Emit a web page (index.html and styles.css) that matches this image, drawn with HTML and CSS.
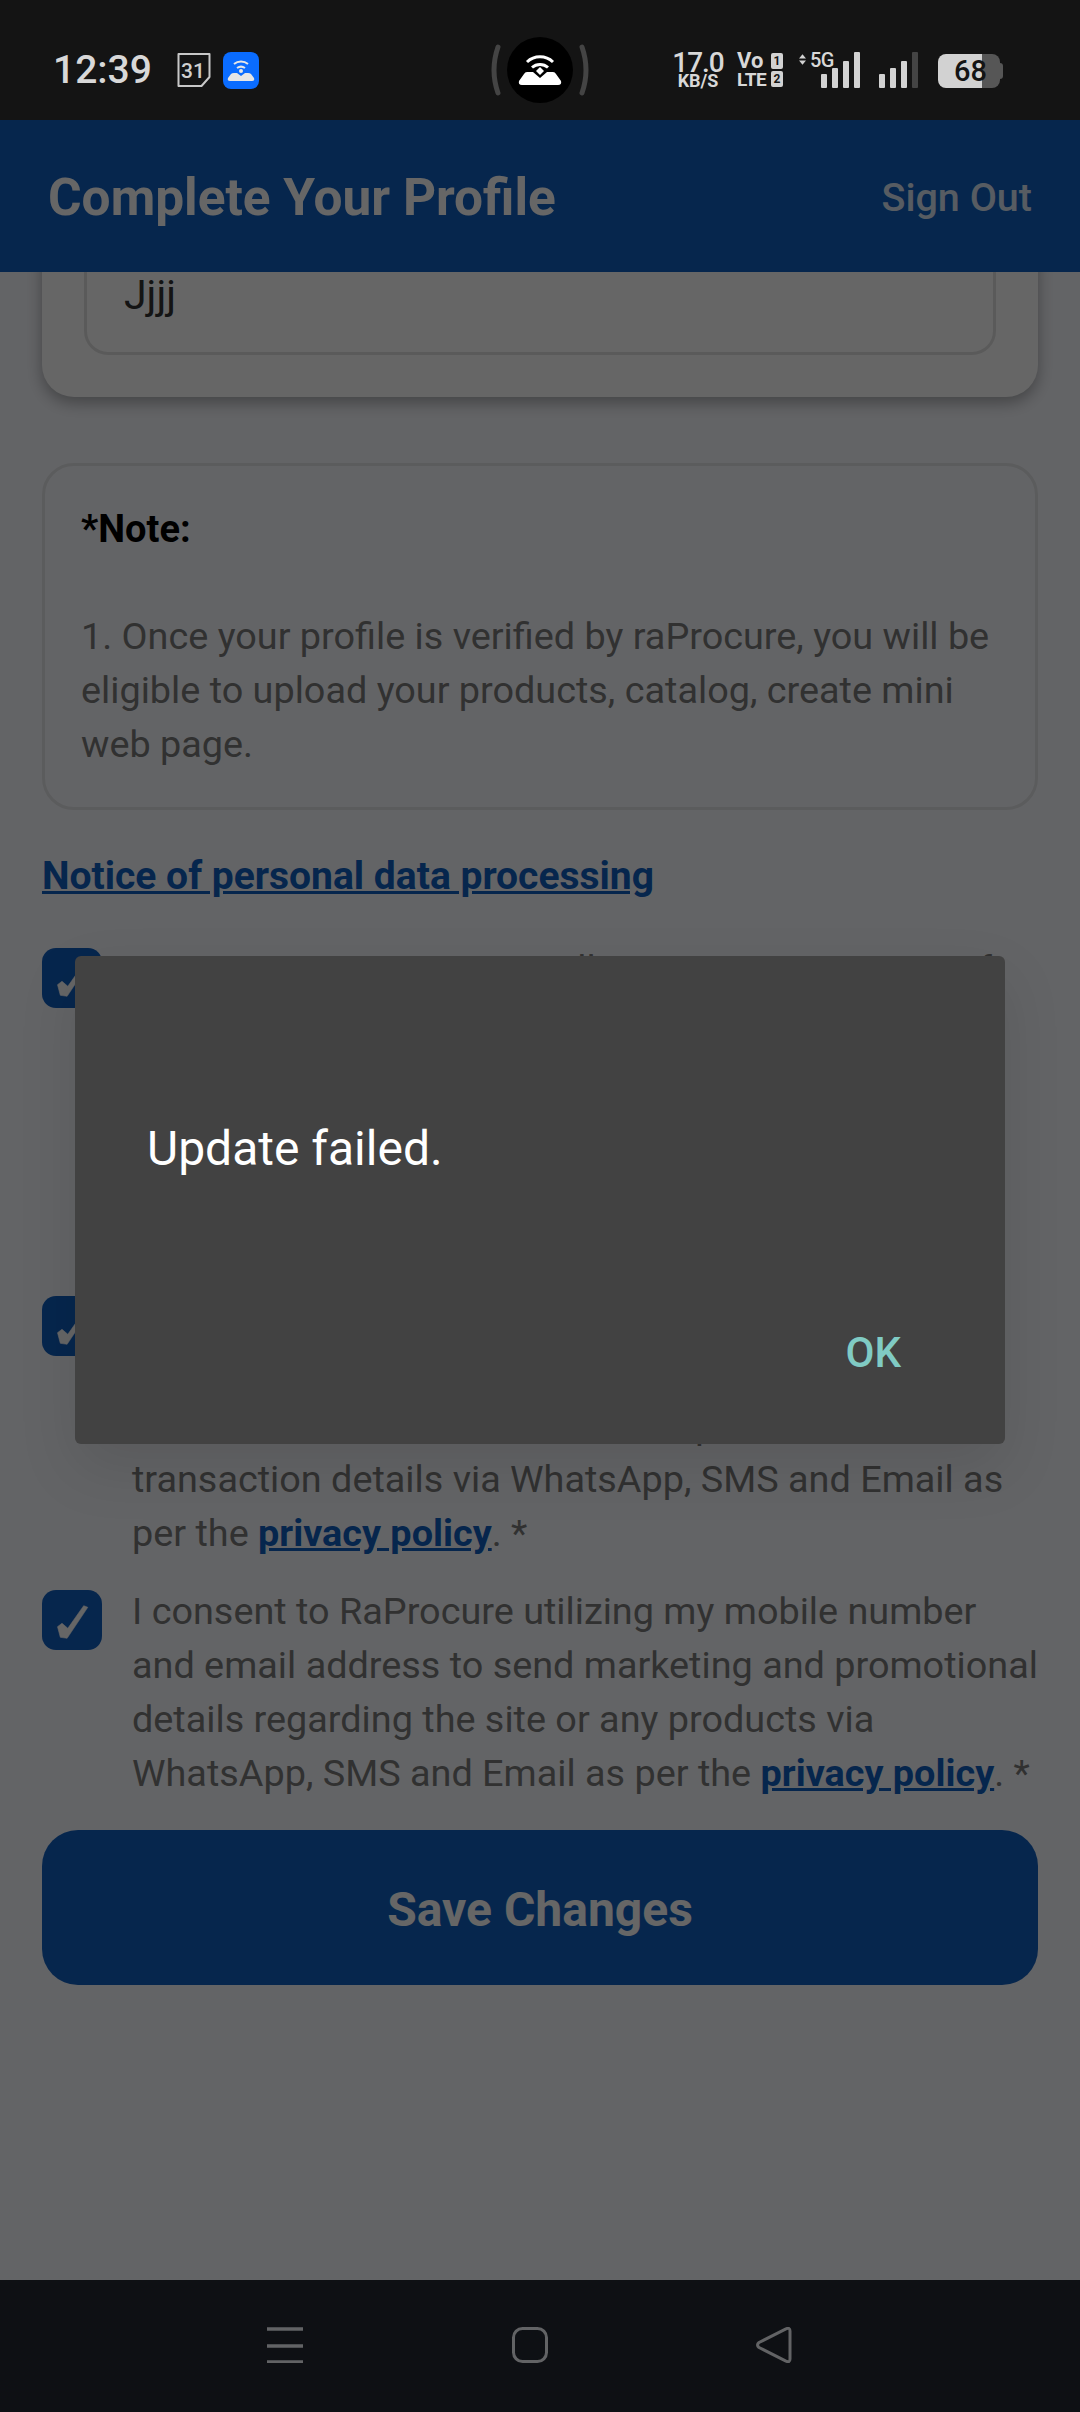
FILE: index.html
```html
<!DOCTYPE html>
<html lang="en">
<head>
    <meta charset="UTF-8" />
    <meta name="viewport" content="width=device-width, initial-scale=1" />
    <title>Complete Your Profile</title>
    <link rel="stylesheet" href="styles.css">
</head>
<body>
    <div class="phone">
        <div class="status-bar">
            <div class="status-left">
                <span class="clock">12:39</span>
                <svg class="cal-icon" width="34" height="36" viewBox="0 0 34 36">
                    <path d="M1.5 2h31v23l-8 9H1.5z" fill="none" stroke="#c8c8c8" stroke-width="2" stroke-linejoin="round"/>
                    <text x="16" y="26" class="cal-text">31</text>
                </svg>
                <svg class="app-icon" width="36" height="37" viewBox="0 0 36 37">
                    <rect width="36" height="37" rx="8" fill="#0a6cff"/>
                    <g fill="none" stroke="#e6e6e6" stroke-width="2">
                        <path d="M11 12a11 11 0 0 1 14 0"/>
                        <path d="M14 16a7 7 0 0 1 8 0"/>
                    </g>
                    <circle cx="18" cy="19" r="2" fill="#e6e6e6"/>
                    <path d="M5 26l3-4q1-1 3-1h3l4 3 4-3h3q2 0 3 1l3 4q1 3-2 3H7q-3 0-2-3z" fill="#e6e6e6"/>
                </svg>
            </div>
            <div class="status-pill">
                <svg width="100" height="66" viewBox="0 0 100 66">
                    <path d="M8 10q-8 23 0 46" fill="none" stroke="#444" stroke-width="5" stroke-linecap="round"/>
                    <path d="M92 10q8 23 0 46" fill="none" stroke="#444" stroke-width="5" stroke-linecap="round"/>
                    <circle cx="50" cy="33" r="33" fill="#000"/>
                    <g fill="none" stroke="#fff" stroke-width="3">
                        <path d="M37 25a19 19 0 0 1 26 0"/>
                        <path d="M42 30.5a12 12 0 0 1 16 0"/>
                    </g>
                    <path d="M50 30l4 4-4 4-4-4z" fill="#fff"/>
                    <path d="M29 44l5-7q1-2 3-2h6l7 6 7-6h6q2 0 3 2l5 7q1 4-3 4H32q-4 0-3-4z" fill="#fff"/>
                </svg>
            </div>
            <div class="status-right">
                <div class="speed">
                    <span class="speed-num">17.0</span>
                    <span class="speed-unit">KB/S</span>
                </div>
                <div class="volte">
                    <div class="volte-row"><span class="vo">Vo</span><span class="sim">1</span></div>
                    <div class="volte-row"><span class="lte">LTE</span><span class="sim sim-two">2</span></div>
                </div>
                <div class="net-type">
                    <svg width="10" height="15" viewBox="0 0 10 15"><path d="M5 0l5 6H0zM5 15l5-6H0z" fill="#d2d2d2"/></svg>
                    <span>5G</span>
                </div>
                <div class="signal signal-first">
                    <i class="bar bar-1"></i><i class="bar bar-2"></i><i class="bar bar-3"></i><i class="bar bar-4"></i>
                </div>
                <div class="signal">
                    <i class="bar bar-1"></i><i class="bar bar-2"></i><i class="bar bar-3"></i><i class="bar bar-4 bar-off"></i>
                </div>
                <div class="battery">
                    <span class="battery-level">68</span>
                    <i class="battery-cap"></i>
                </div>
            </div>
        </div>

        <div class="screen">
            <header class="app-bar">
                <h1>Complete Your Profile</h1>
                <a class="sign-out">Sign Out</a>
            </header>

            <main class="content">
                <section class="card">
                    <div class="field">Jjjj</div>
                </section>

                <section class="note">
                    <p class="note-title">*Note:</p>
                    <p>1. Once your profile is verified by raProcure, you will be eligible to upload your products, catalog, create mini web page.</p>
                </section>

                <a class="notice-link">Notice of personal data processing</a>

                <div class="consents">
                    <div class="consent consent-first">
                        <svg class="check" width="60" height="60" viewBox="0 0 60 60"><path d="M15.5 36.7L20 33.3l5.8 5L41.7 15.7l4.1 1.6-20.7 31-6.8-1z" fill="#fff" stroke="#fff" stroke-width="0.6" stroke-linejoin="round"/></svg>
                        <p>I am a genuine person, I will not misuse any term of service of the RaProcure site, and I confirm that all of the information which I have provided in this profile form is true and correct to the best of my knowledge, and that I accept the full terms set out for using the site and its related services. *</p>
                    </div>
                    <div class="consent">
                        <svg class="check" width="60" height="60" viewBox="0 0 60 60"><path d="M15.5 36.7L20 33.3l5.8 5L41.7 15.7l4.1 1.6-20.7 31-6.8-1z" fill="#fff" stroke="#fff" stroke-width="0.6" stroke-linejoin="round"/></svg>
                        <p>I consent to RaProcure utilizing my mobile number and email address to send essential service alerts, notices about the status of each quote and all other transaction details via WhatsApp, SMS and Email as per the <a>privacy policy</a>. *</p>
                    </div>
                    <div class="consent">
                        <svg class="check" width="60" height="60" viewBox="0 0 60 60"><path d="M15.5 36.7L20 33.3l5.8 5L41.7 15.7l4.1 1.6-20.7 31-6.8-1z" fill="#fff" stroke="#fff" stroke-width="0.6" stroke-linejoin="round"/></svg>
                        <p>I consent to RaProcure utilizing my mobile number and email address to send marketing and promotional details regarding the site or any products via WhatsApp, SMS and Email as per the <a>privacy policy</a>. *</p>
                    </div>
                </div>

                <button class="save-btn">Save Changes</button>
            </main>

            <div class="scrim">
                <div class="dialog">
                    <p class="dialog-msg">Update failed.</p>
                    <div class="dialog-actions"><span class="dialog-ok">OK</span></div>
                </div>
            </div>
        </div>

        <div class="nav-bar">
            <svg width="36" height="36" viewBox="0 0 36 36">
                <path d="M0 2h36M0 19h36M0 35h36" stroke="#626365" stroke-width="3.5" fill="none"/>
            </svg>
            <svg width="36" height="36" viewBox="0 0 36 36">
                <rect x="1.5" y="1.5" width="33" height="33" rx="9" fill="none" stroke="#626365" stroke-width="3"/>
            </svg>
            <svg width="36" height="36" viewBox="0 0 36 36">
                <path d="M3 15.5L30 1.8q4-1.6 4 2.2v28q0 3.8-4 2.2L3 20.5q-3-2.5 0-5z" fill="none" stroke="#626365" stroke-width="3" stroke-linejoin="round"/>
            </svg>
        </div>
    </div>
</body>
</html>
```

FILE: styles.css
```css
* {
    box-sizing: border-box;
}
body {
    margin: 0;
    background-color: #000;
    font-family: Roboto, "Liberation Sans", sans-serif;
}
p {
    margin: 0;
}
.phone {
    width: 1080px;
    height: 2412px;
    display: flex;
    flex-direction: column;
    overflow: hidden;
}

/* status bar */
.status-bar {
    height: 120px;
    flex-shrink: 0;
    background-color: #141414;
    position: relative;
    display: flex;
    justify-content: space-between;
    align-items: center;
    padding: 20px 80px 0 53px;
    color: #d8d8d8;
}
.status-left {
    display: flex;
    align-items: center;
}
.clock {
    font-size: 39px;
    font-weight: 500;
    width: 124px;
}
.cal-icon {
    margin-right: 12px;
}
.cal-text {
    font-size: 21px;
    font-weight: 500;
    fill: #d0d0d0;
    text-anchor: middle;
}
.status-pill {
    position: absolute;
    left: 490px;
    top: 37px;
    height: 66px;
}
.status-right {
    display: flex;
    align-items: flex-end;
    height: 36px;
}
.speed {
    width: 50px;
    margin-right: 14px;
    display: flex;
    flex-direction: column;
    align-items: center;
    line-height: 1;
}
.speed-num {
    font-size: 28px;
    font-weight: 500;
    letter-spacing: -1px;
    height: 21px;
    line-height: 21px;
}
.speed-unit {
    font-size: 18px;
    font-weight: 700;
    line-height: 15px;
}
.volte {
    width: 46px;
    margin-right: 16px;
    font-weight: 700;
    line-height: 1;
}
.volte-row {
    display: flex;
    justify-content: space-between;
    align-items: center;
    height: 18px;
}
.vo {
    font-size: 22px;
}
.lte {
    font-size: 19px;
    letter-spacing: -0.5px;
}
.sim {
    width: 12px;
    height: 16px;
    border-radius: 2px;
    background-color: #d2d2d2;
    color: #141414;
    font-size: 12px;
    text-align: center;
    line-height: 16px;
}
.net-type {
    display: flex;
    align-items: flex-start;
    gap: 4px;
    height: 36px;
    width: 35px;
    font-size: 20px;
    font-weight: 500;
    line-height: 16px;
    letter-spacing: -0.5px;
    margin-right: -13px;
}
.signal {
    display: flex;
    align-items: flex-end;
    gap: 5px;
    height: 36px;
    margin-right: 20px;
}
.signal-first {
    margin-right: 19px;
}
.bar {
    display: block;
    width: 6px;
    border-radius: 1px;
    background-color: #d2d2d2;
}
.bar-1 {
    height: 14px;
}
.bar-2 {
    height: 20px;
}
.bar-3 {
    height: 27px;
}
.bar-4 {
    height: 36px;
}
.bar-off {
    background-color: #444;
}
.battery {
    width: 62px;
    height: 34px;
    border-radius: 8px;
    background: linear-gradient(to right, #d2d2d2 0 44px, #565656 44px 100%);
    color: #141414;
    font-size: 29px;
    font-weight: 500;
    position: relative;
    padding-left: 16px;
    line-height: 35px;
}
.battery-level {
    display: block;
}
.battery-cap {
    position: absolute;
    right: -3px;
    top: 9px;
    width: 3px;
    height: 16px;
    border-radius: 0 3px 3px 0;
    background-color: #565656;
}

/* app screen */
.screen {
    flex: 1;
    position: relative;
    background-color: #f8faff;
    color: #7a7a7a;
    font-size: 37.8px;
    line-height: 54px;
    overflow: hidden;
}
.app-bar {
    height: 152px;
    background-color: #115fc0;
    display: flex;
    justify-content: space-between;
    align-items: center;
    padding: 3px 48px 0 48px;
    position: relative;
    z-index: 1;
}
.app-bar h1 {
    margin: 0;
    color: #fff;
    font-size: 51.4px;
    font-weight: 700;
    line-height: 1;
}
.sign-out {
    color: rgba(255, 255, 255, 0.85);
    font-size: 39.5px;
    font-weight: 500;
    line-height: 1;
}
.content {
    padding: 0 42px;
    display: flex;
    flex-direction: column;
}
.card {
    margin-top: -40px;
    background-color: #fff;
    border-radius: 32px;
    padding: 0 42px 42px;
    box-shadow: 0 6px 16px rgba(0, 0, 0, 0.32);
}
.field {
    height: 123px;
    border: 3px solid #e2e2e2;
    border-radius: 24px;
    padding: 33px 37px 0;
    color: #333;
    font-size: 41px;
    line-height: 54px;
}
.note {
    margin-top: 66px;
    padding: 36px 36px 36px;
    border: 3px solid #e4e5e8;
    border-radius: 32px;
}
.note-title {
    color: #000;
    font-size: 38px;
    font-weight: 700;
    margin-bottom: 53px;
}
.notice-link {
    margin-top: 39px;
    color: #115fc0;
    font-size: 39px;
    font-weight: 700;
    text-decoration: underline;
}
.consents {
    margin-top: 38px;
    display: flex;
    flex-direction: column;
    gap: 23px;
}
.consent {
    display: flex;
    gap: 30px;
}
.consent p {
    flex: 1;
    padding-top: 1px;
}
.consent-first p {
    padding-right: 30px;
}
.consent a {
    color: #115fc0;
    font-weight: 700;
    text-decoration: underline;
}
.check {
    flex-shrink: 0;
    margin-top: 7px;
    border-radius: 14px;
    background-color: #115fc0;
}
.save-btn {
    margin-top: 30px;
    height: 155px;
    border: none;
    border-radius: 36px;
    background-color: #115fc0;
    color: #fff;
    font-family: Roboto, "Liberation Sans", sans-serif;
    font-size: 48px;
    font-weight: 700;
    padding: 3px 0 0;
}

/* dialog over the page */
.scrim {
    position: absolute;
    inset: 0;
    z-index: 2;
    background-color: rgba(0, 0, 0, 0.6);
    display: flex;
    justify-content: center;
    align-items: center;
}
.dialog {
    width: 930px;
    height: 488px;
    background-color: #424242;
    border-radius: 6px;
    box-shadow: 0 24px 60px rgba(0, 0, 0, 0.1);
    display: flex;
    flex-direction: column;
    justify-content: space-between;
    padding: 165px 72px 66px;
}
.dialog-msg {
    color: #fff;
    font-size: 48px;
    line-height: 56px;
}
.dialog-actions {
    display: flex;
    justify-content: flex-end;
    padding-right: 32px;
}
.dialog-ok {
    color: #80cbc4;
    font-size: 42px;
    font-weight: 500;
    line-height: 50px;
}

/* system nav */
.nav-bar {
    height: 132px;
    flex-shrink: 0;
    background-color: #0e1014;
    display: flex;
    align-items: flex-start;
    padding: 47px 288px 0 267px;
    justify-content: space-between;
}
```
